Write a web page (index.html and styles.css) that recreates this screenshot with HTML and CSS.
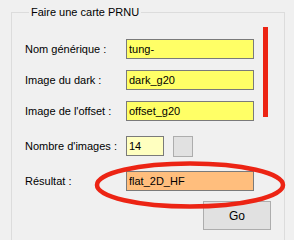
FILE: index.html
```html
<!DOCTYPE html>
<html>
  <head>
    <meta charset="utf-8">
    <title>Faire une carte PRNU</title>
    <link rel="stylesheet" href="styles.css">
  </head>
  <body>

    <fieldset class="group">
      <legend class="group-title">Faire une carte PRNU</legend>

      <div class="form">
        <label class="form-label">Nom générique :</label>
        <div class="form-field"><input class="box box-yellow" type="text" value="tung-"></div>

        <label class="form-label">Image du dark :</label>
        <div class="form-field"><input class="box box-yellow" type="text" value="dark_g20"></div>

        <label class="form-label">Image de l'offset :</label>
        <div class="form-field"><input class="box box-yellow" type="text" value="offset_g20"></div>

        <label class="form-label form-label-wide">Nombre d'images :</label>
        <div class="form-field">
          <input class="box box-pale box-small" type="text" value="14">
          <button class="square"></button>
        </div>

        <label class="form-label form-label-wide">Résultat :</label>
        <div class="form-field"><input class="box box-orange" type="text" value="flat_2D_HF"></div>
      </div>

      <div class="actions">
        <button class="go">Go</button>
      </div>
    </fieldset>

    <!-- annotations drawn over the dialog -->
    <div class="mark-bar"></div>
    <svg class="mark-ring" width="294" height="240" viewBox="0 0 294 240">
      <ellipse cx="190" cy="185" rx="93" ry="21.5" fill="none" stroke="#ec2414" stroke-width="4.5"></ellipse>
    </svg>

  </body>
</html>
```

FILE: styles.css
```css
* {
  font-family: "Liberation Sans", Arial, sans-serif;
  box-sizing: border-box;
}

body {
  margin: 0px;
  padding: 0px;
  width: 294px;
  height: 240px;
  overflow: hidden;
  background-color: rgb(240, 240, 240);
  position: relative;
}

.group {
  margin: 5px 9px 0px 11px;
  padding: 20px 0px 0px 13px;
  border: 1px solid rgb(220, 220, 220);
  border-bottom: none;
  height: 235px;
}

.group-title {
  font-size: 11px;
  line-height: 14px;
  color: rgb(0, 0, 0);
  padding: 0px 2px;
  margin-left: 4px;
}

.form {
  display: grid;
  grid-template-columns: 101px 1fr;
  row-gap: 11px;
}

.form-label {
  font-size: 11px;
  color: rgb(0, 0, 0);
  display: flex;
  align-items: center;
  height: 20px;
}

.form-label-wide {
  margin-top: 4px;
}

.form-label-wide + .form-field {
  margin-top: 4px;
}

.form-field {
  display: flex;
  align-items: center;
  gap: 9px;
  height: 20px;
}

.box {
  width: 128px;
  height: 20px;
  border: 1px solid rgb(122, 122, 122);
  padding: 0px 2px;
  font-size: 11px;
  color: rgb(0, 0, 0);
  outline: none;
}

.box-yellow {
  background-color: rgb(255, 255, 102);
}

.box-pale {
  background-color: rgb(255, 255, 192);
}

.box-orange {
  background-color: rgb(255, 190, 125);
}

.box-small {
  width: 38px;
}

.square {
  width: 20px;
  height: 21px;
  border: 1px solid rgb(173, 173, 173);
  background-color: rgb(225, 225, 225);
  padding: 0px;
}

.actions {
  display: flex;
  justify-content: flex-end;
  padding-right: 13px;
  margin-top: 10px;
}

.go {
  width: 68px;
  height: 29px;
  border: 1px solid rgb(173, 173, 173);
  background-color: rgb(225, 225, 225);
  font-size: 12px;
  color: rgb(0, 0, 0);
  padding: 0px;
}

.mark-bar {
  position: absolute;
  left: 263px;
  top: 27px;
  width: 5px;
  height: 90px;
  background-color: rgb(236, 36, 20);
}

.mark-ring {
  position: absolute;
  left: 0px;
  top: 0px;
  pointer-events: none;
}
```
